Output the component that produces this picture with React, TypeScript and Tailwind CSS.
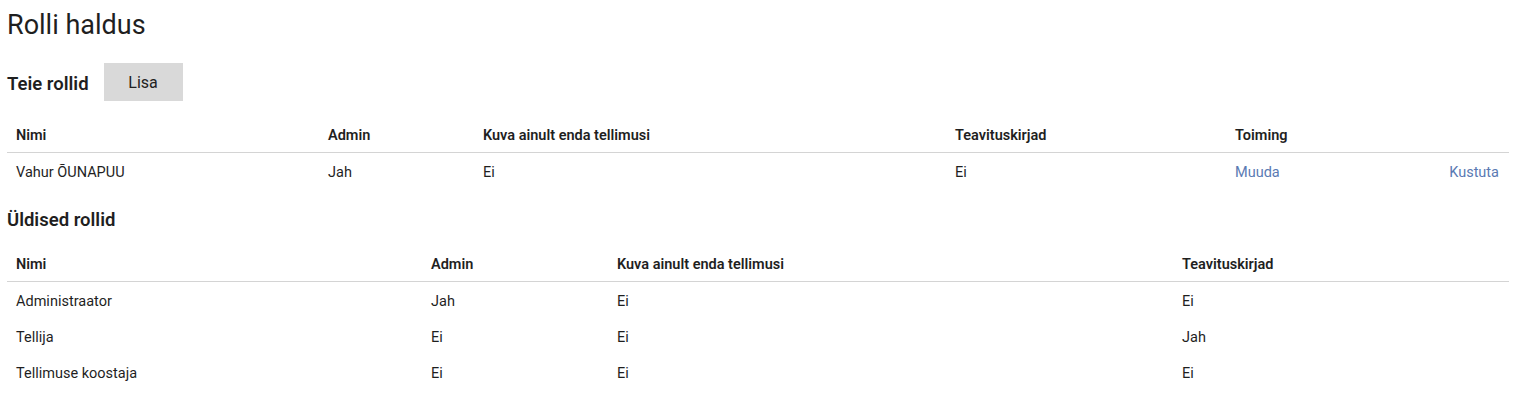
const yours = [
  { name: "Vahur ÕUNAPUU", admin: "Jah", own: "Ei", mail: "Ei" },
];

const general = [
  { name: "Administraator", admin: "Jah", own: "Ei", mail: "Ei" },
  { name: "Tellija", admin: "Ei", own: "Ei", mail: "Jah" },
  { name: "Tellimuse koostaja", admin: "Ei", own: "Ei", mail: "Ei" },
];

export default function App() {
  return (
    <div className="min-h-screen bg-white pl-[7px] pr-[16px] pt-[9px] font-['Roboto',sans-serif] text-[#1f1f1f]">
      <h1 className="text-[27px] font-normal leading-[32px]">Rolli haldus</h1>

      <div className="mt-[22px] flex items-center gap-[15px]">
        <h2 className="pt-[6px] text-[18.5px] font-semibold">Teie rollid</h2>
        <button className="h-[38px] w-[79px] bg-[#d9d9d9] pt-[2px] text-[16px] text-[#222]">Lisa</button>
      </div>

      <table className="mt-[15px] w-full table-fixed border-collapse text-[14.5px]">
        <colgroup>
          <col className="w-[312px]" />
          <col className="w-[155px]" />
          <col className="w-[472px]" />
          <col className="w-[280px]" />
          <col className="w-[142px]" />
          <col />
        </colgroup>
        <thead>
          <tr className="border-b border-[#d4d4d4] text-left">
            <th className="h-[36px] px-[9px] pt-[4px] font-semibold">Nimi</th>
            <th className="h-[36px] px-[9px] pt-[4px] font-semibold">Admin</th>
            <th className="h-[36px] px-[9px] pt-[4px] font-semibold">Kuva ainult enda tellimusi</th>
            <th className="h-[36px] px-[9px] pt-[4px] font-semibold">Teavituskirjad</th>
            <th className="h-[36px] px-[9px] pt-[4px] font-semibold">Toiming</th>
            <th />
          </tr>
        </thead>
        <tbody>
          {yours.map((r) => (
            <tr key={r.name}>
              <td className="h-[37px] px-[9px] pt-[4px]">{r.name}</td>
              <td className="h-[37px] px-[9px] pt-[4px]">{r.admin}</td>
              <td className="h-[37px] px-[9px] pt-[4px]">{r.own}</td>
              <td className="h-[37px] px-[9px] pt-[4px]">{r.mail}</td>
              <td className="h-[37px] px-[9px] pt-[4px] text-[#5a7ab3]">Muuda</td>
              <td className="h-[37px] px-[10px] pt-[4px] text-right text-[#5a7ab3]">Kustuta</td>
            </tr>
          ))}
        </tbody>
      </table>

      <h2 className="mt-[19px] text-[18.5px] font-semibold leading-[24px]">Üldised rollid</h2>

      <table className="mt-[13px] w-full table-fixed border-collapse text-[14.5px]">
        <colgroup>
          <col className="w-[415px]" />
          <col className="w-[186px]" />
          <col className="w-[565px]" />
          <col />
        </colgroup>
        <thead>
          <tr className="border-b border-[#d4d4d4] text-left">
            <th className="h-[36px] px-[9px] pt-[4px] font-semibold">Nimi</th>
            <th className="h-[36px] px-[9px] pt-[4px] font-semibold">Admin</th>
            <th className="h-[36px] px-[9px] pt-[4px] font-semibold">Kuva ainult enda tellimusi</th>
            <th className="h-[36px] px-[9px] pt-[4px] font-semibold">Teavituskirjad</th>
          </tr>
        </thead>
        <tbody>
          {general.map((r) => (
            <tr key={r.name}>
              <td className="h-[36px] px-[9px] pt-[6px]">{r.name}</td>
              <td className="h-[36px] px-[9px] pt-[6px]">{r.admin}</td>
              <td className="h-[36px] px-[9px] pt-[6px]">{r.own}</td>
              <td className="h-[36px] px-[9px] pt-[6px]">{r.mail}</td>
            </tr>
          ))}
        </tbody>
      </table>
    </div>
  );
}
